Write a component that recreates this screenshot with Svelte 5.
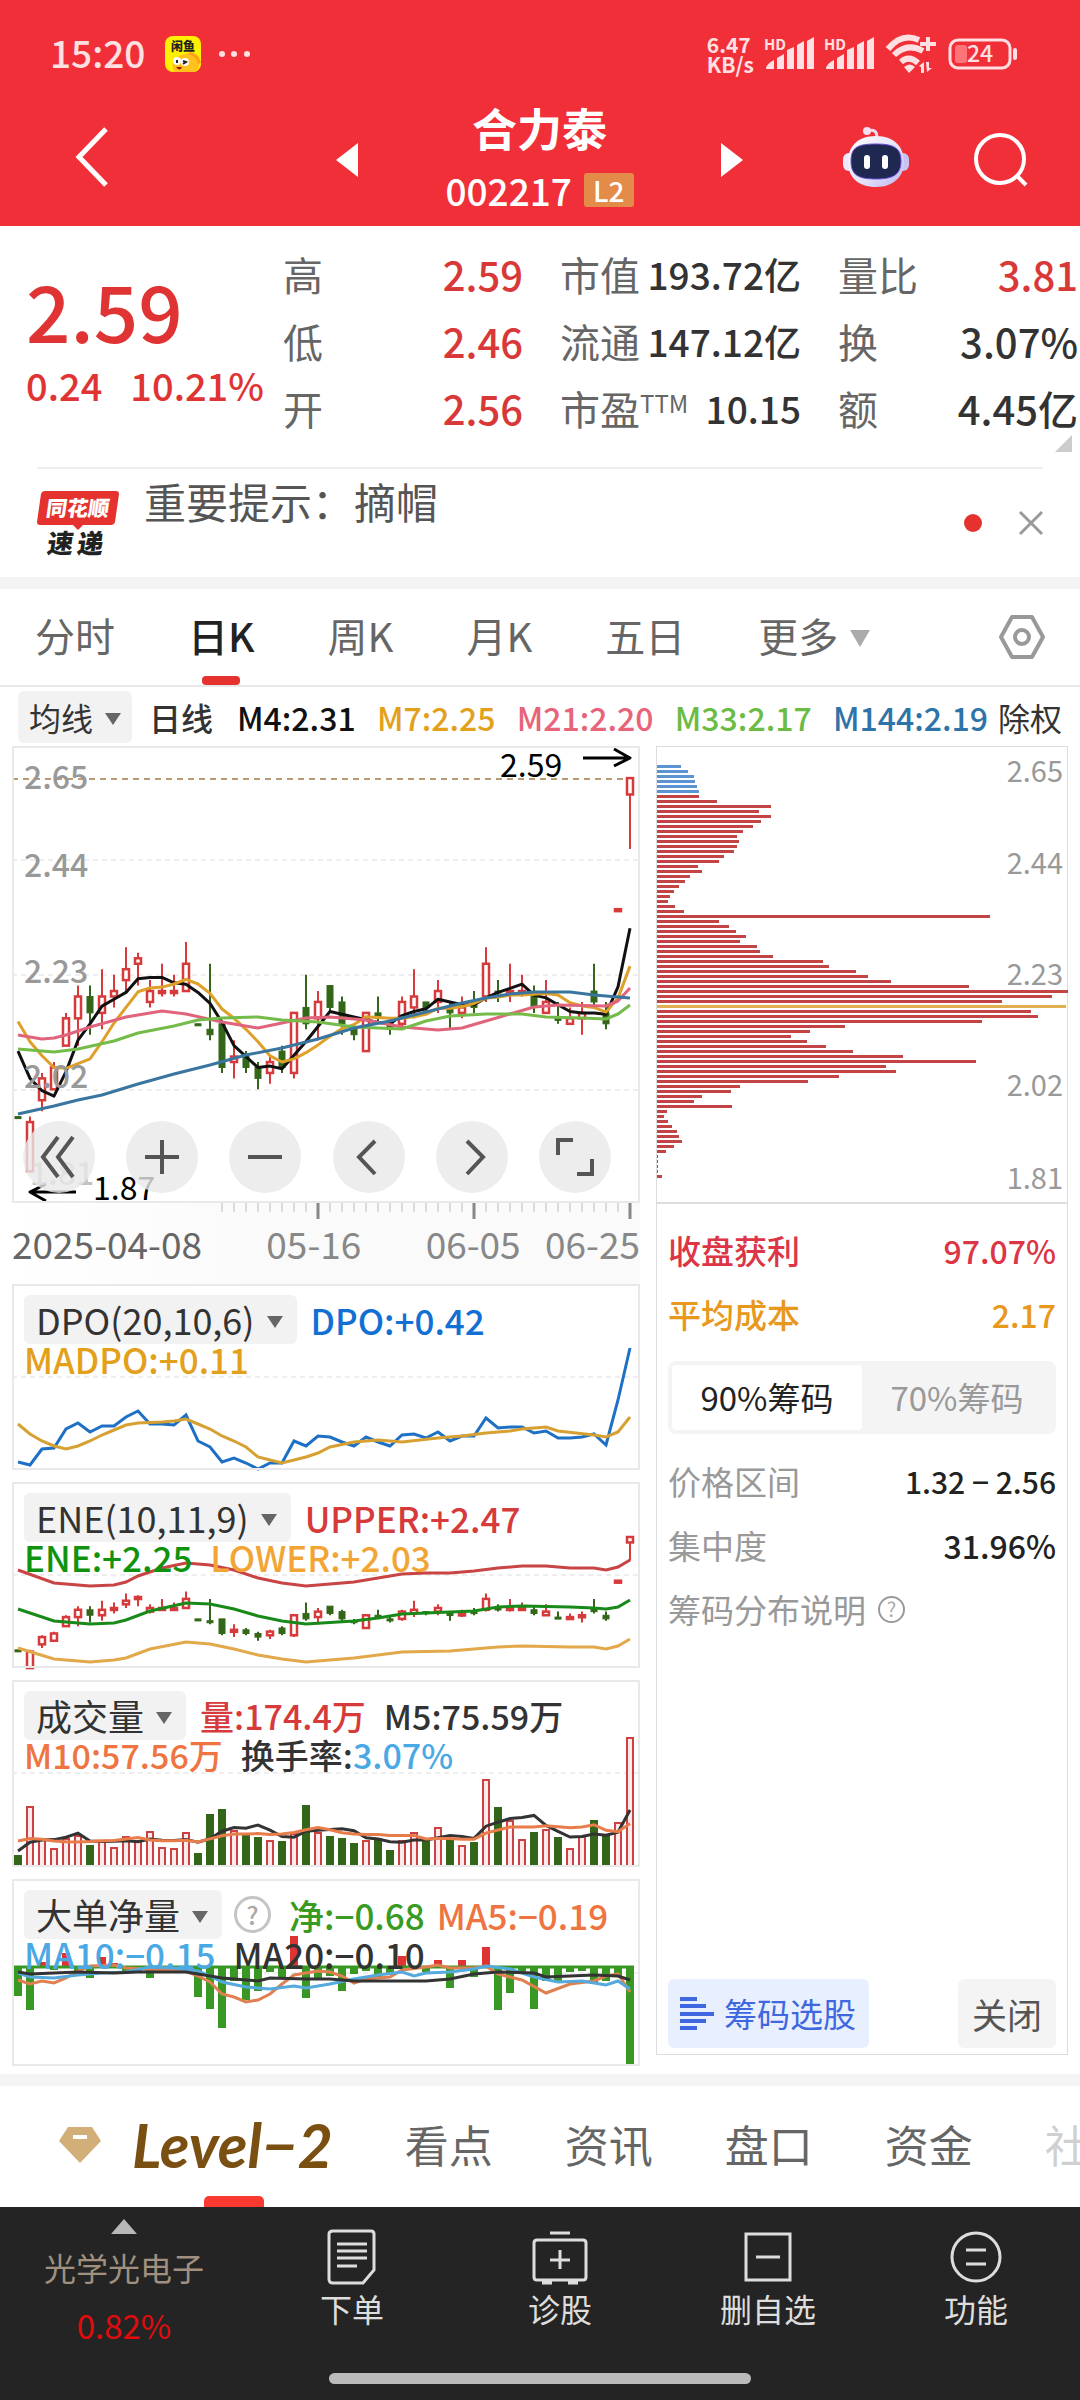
<script>
	// one step of every time chart is 12 units wide, 52 trading days
	const STEP = 12;
	const x = (i) => 6 + i * STEP;

	// [open, high, low, close, falling] in cents
	const candles = [
		[197, 197, 197, 197, 1], [187, 197, 187, 196], [200, 205, 198, 204], [202, 207, 202, 206],
		[210, 216, 210, 215], [215, 221, 210, 219], [219, 221, 212, 216], [216, 224, 213, 219],
		[219, 223, 217, 220], [222, 228, 220, 224], [225, 227, 221, 226], [218, 222, 217, 220],
		[220, 225, 219, 220], [220, 223, 219, 220], [220, 229, 220, 225], [214, 214, 214, 214, 1],
		[213, 225, 211, 212], [214, 214, 205, 206], [207, 211, 204, 208], [208, 209, 205, 206],
		[206, 207, 202, 204], [205, 208, 203, 207], [209, 210, 205, 206], [205, 216, 204, 216],
		[217, 223, 213, 214], [215, 220, 211, 218], [221, 221, 216, 217], [218, 219, 212, 214],
		[213, 214, 211, 212], [209, 216, 209, 216], [216, 219, 214, 215], [214, 215, 212, 213],
		[214, 219, 213, 218], [217, 224, 215, 219], [218, 218, 216, 217], [218, 222, 216, 220],
		[217, 218, 213, 216], [216, 219, 215, 217], [218, 220, 216, 217], [219, 228, 218, 225],
		[220, 222, 218, 220, 1], [220, 225, 218, 220], [220, 223, 219, 220], [219, 221, 216, 217],
		[216, 222, 216, 218], [215, 218, 214, 215, 1], [214, 217, 214, 215], [215, 218, 212, 216],
		[220, 225, 217, 218], [216, 218, 213, 214], [235, 235, 235, 235], [256, 259, 246, 259]
	].map(([o, h, l, c, f]) => ({ o, h, l, c, down: c < o || f === 1 }));

	const priceY = (p) => 114 + (244 - p) * 5.46;
	const eneY = (p) => 55 + (259 - p) * 1.82;

	function average(values, history, n) {
		const all = [...history, ...values];
		return values.map((_, i) => {
			const end = i + history.length + 1;
			return all.slice(end - n, end).reduce((a, b) => a + b, 0) / n;
		});
	}

	const closes = candles.map((d) => d.c);
	const closeHistory = [222, 222, 221, 216, 213, 210];
	const line = (ys) => ys.map((y, i) => `${x(i)},${y.toFixed(1)}`).join(' ');
	const sparse = (pts) => pts.map(([i, y]) => `${x(i)},${y}`).join(' ');

	const ma4 = line(average(closes, closeHistory, 4).map(priceY));
	const ma7 = line(average(closes, closeHistory, 7).map(priceY));
	const ma21 = sparse([[0, 289], [2, 293], [3, 292], [4, 289], [6, 281], [9, 271], [12, 265], [14, 268], [17, 276], [20, 282], [22, 277], [24, 272], [26, 271], [29, 274], [32, 281], [35, 284], [37, 282], [39, 275], [41, 268], [43, 261], [45, 259], [49, 260], [50, 255], [51, 242]]);
	const ma33 = sparse([[0, 303], [3, 306], [5, 303], [8, 295], [10, 287], [13, 280], [15, 274], [17, 272], [20, 271], [22, 274], [25, 276], [28, 281], [32, 283], [34, 275], [36, 270], [39, 268], [42, 268], [44, 271], [47, 272], [49, 273], [50, 268], [51, 259]]);
	const ma144 = sparse([[0, 368], [3, 360], [5, 354], [7, 349], [10, 338], [13, 328], [16, 319], [19, 309], [22, 302], [25, 293], [28, 282], [31, 275], [34, 266], [37, 257], [39, 252], [41, 248], [43, 246], [46, 246], [48, 249], [50, 251], [51, 252]]);

	const dpo = line([178, 181, 165, 164, 145, 139, 148, 142, 142, 133, 127, 140, 140, 141, 131, 157, 163, 178, 174, 179, 185, 179, 179, 157, 162, 152, 153, 158, 162, 153, 158, 162, 151, 150, 154, 148, 157, 152, 152, 134, 144, 143, 143, 149, 147, 154, 154, 153, 150, 161, 116, 64]);
	const madpo = sparse([[0, 140], [1, 150], [2, 157], [3, 162], [4, 165], [5, 162], [6, 157], [7, 151], [8, 146], [9, 141], [10, 139], [12, 138], [13, 137], [14, 135], [15, 140], [16, 145], [17, 152], [18, 157], [19, 163], [20, 173], [21, 176], [22, 179], [23, 176], [24, 173], [25, 169], [26, 163], [28, 158], [30, 156], [32, 158], [35, 154], [37, 152], [39, 149], [41, 147], [42, 145], [44, 143], [45, 147], [48, 151], [49, 153], [50, 148], [51, 133]]);

	const upper = sparse([[0, 88], [3, 101], [6, 104], [8, 103], [9, 100], [10, 94], [12, 86], [14, 81], [16, 83], [18, 88], [20, 96], [22, 101], [24, 104], [28, 100], [32, 92], [34, 91], [36, 91], [38, 89], [40, 86], [42, 84], [44, 84], [46, 86], [48, 86], [49, 88], [50, 85], [51, 78]]);
	const ene = sparse([[0, 127], [3, 139], [6, 142], [8, 141], [9, 138], [11, 129], [14, 121], [16, 122], [18, 127], [20, 134], [22, 139], [24, 142], [28, 139], [30, 136], [32, 132], [36, 130], [38, 129], [40, 125], [42, 124], [46, 125], [48, 126], [49, 127], [50, 125], [51, 118]]);
	const lower = sparse([[0, 166], [3, 177], [6, 180], [8, 178], [9, 176], [11, 167], [14, 160], [16, 162], [18, 167], [20, 173], [22, 177], [24, 180], [28, 176], [32, 170], [36, 169], [38, 167], [40, 165], [42, 164], [46, 165], [48, 165], [49, 167], [50, 164], [51, 157]]);

	const volumes = [12, 61, 28, 19, 29, 32, 22, 26, 20, 31, 27, 36, 20, 19, 35, 14, 53, 58, 37, 32, 30, 27, 26, 34, 62, 35, 31, 29, 24, 27, 29, 17, 27, 35, 27, 40, 29, 22, 25, 88, 60, 47, 28, 35, 38, 30, 19, 31, 47, 32, 45, 130];
	const volumeHistory = [36, 36, 36, 36, 36, 17, 17, 17, 17];
	const vol5 = line(average(volumes, volumeHistory, 5).map((v) => 187 - v));
	const vol10 = line(average(volumes, volumeHistory, 10).map((v) => 187 - v));

	const net = [28, 42, -6, 2, -15, 3, 10, -11, -5, 3, 3, 10, 3, 3, 4, 29, 41, 60, 13, 32, 23, 4, 11, -32, 30, 11, 8, 23, 6, 3, 11, 6, -12, -2, 4, -8, 20, -8, 9, -21, 42, 25, 6, 41, 13, 14, 4, 3, 16, 13, 9, 97];
	const net5 = sparse([[0, 101], [1, 105], [2, 102], [3, 104], [4, 99], [5, 92], [6, 87], [8, 86], [9, 89], [12, 91], [14, 92], [15, 97], [16, 103], [17, 115], [18, 118], [19, 123], [20, 121], [21, 115], [22, 105], [23, 96], [25, 92], [26, 93], [27, 97], [28, 104], [29, 100], [31, 98], [32, 91], [34, 88], [35, 86], [36, 89], [38, 89], [39, 87], [40, 95], [41, 98], [42, 101], [44, 114], [46, 105], [48, 102], [49, 97], [50, 95], [51, 113]]);
	const net10 = sparse([[0, 94], [1, 98], [3, 99], [5, 96], [7, 94], [9, 93], [11, 88], [13, 89], [15, 92], [16, 97], [17, 103], [19, 108], [21, 110], [23, 107], [24, 109], [26, 105], [28, 100], [30, 96], [32, 93], [33, 97], [34, 94], [36, 93], [38, 90], [39, 87], [41, 90], [43, 98], [45, 103], [47, 102], [49, 106], [50, 102], [51, 110]]);
	const net20 = sparse([[0, 93], [1, 95], [3, 94], [5, 93], [8, 94], [10, 93], [14, 93], [17, 99], [20, 102], [21, 99], [24, 100], [26, 100], [28, 102], [31, 102], [34, 102], [36, 100], [38, 95], [40, 93], [43, 94], [44, 98], [46, 97], [48, 96], [50, 97], [51, 101]]);

	const chips = [24, 31, 37, 38, 40, 42, 42, 60, 114, 102, 114, 104, 96, 86, 80, 82, 80, 77, 67, 62, 41, 45, 33, 28, 22, 17, 13, 11, 18, 27, 333, 62, 72, 79, 89, 83, 100, 103, 116, 166, 172, 199, 211, 234, 312, 411, 395, 345, 409, 374, 381, 325, 188, 153, 134, 150, 169, 196, 246, 319, 229, 239, 182, 151, 83, 74, 45, 37, 75, 10, 7, 11, 15, 20, 22, 25, 17, 9, 1, 1, 1, 1, 5];
	const chipColor = (n) => (n < 6 ? '#5b93d3' : n === 48 ? '#e0b050' : '#c24444');

	const ticks = Array.from({ length: 35 }, (_, k) => k + 17);
	const periods = ['分时', '日K', '周K', '月K', '五日'];
	let period = '日K';
	let range = '90';

	const averages = [
		['M4:2.31', '#111'],
		['M7:2.25', '#e3a01b'],
		['M21:2.20', '#e8647a'],
		['M33:2.17', '#6cbb45'],
		['M144:2.19', '#2f74a8']
	];
	const controls = [
		['最早', 'M35 16 20 36 35 56M50 16 35 36 50 56'],
		['放大', 'M36 19V53M19 36H53'],
		['缩小', 'M19 36H53'],
		['左移', 'M42 20 26 36 42 53'],
		['右移', 'M31 20 47 36 31 53'],
		['全屏', 'M19 34V19H34M53 38V53H38']
	];
</script>

{#snippet candleSet(y, w)}
	{#each candles as d, i}
		{@const top = Math.min(y(d.o), y(d.c))}
		{@const h = Math.max(Math.abs(y(d.o) - y(d.c)), 2)}
		{@const color = d.down ? '#336618' : '#d63a3a'}
		<path d="M{x(i)} {y(d.h)}V{top}M{x(i)} {top + h}V{y(d.l)}" stroke={color} stroke-width="2" />
		<rect x={x(i) - w / 2} y={top} width={w} height={h} fill={d.down ? color : '#fff'} stroke={color} stroke-width={d.down ? 1 : 2.5} />
	{/each}
{/snippet}

{#snippet signal()}
	<svg class="signal" viewBox="0 0 50 36" aria-hidden="true">
		<text x="0" y="14" font-size="15" font-weight="700">HD</text>
		<path d="M2 33q0-5 8-9v9ZM13 22l7-4v15h-7ZM23 14l7-3v22h-7ZM33 9l7-4v28h-7ZM43 5l7-4v32h-7Z" />
	</svg>
{/snippet}

<main>
	<header>
		<div class="status">
			<span class="clock">15:20</span>
			<svg class="fish" viewBox="0 0 36 36" aria-hidden="true">
				<rect width="36" height="36" rx="8" fill="#fdf000" />
				<path d="M9 36q-5-14 8-17 12-4 17 6v5q-1 5-7 6Z" fill="#ffc21c" />
				<path d="M22 18q9 1 11 10l3-1q-2-9-10-11Z" fill="#ff9f1a" />
				<text x="6" y="15" font-size="12" font-weight="900" fill="#222">闲鱼</text>
				<circle cx="12" cy="25" r="4" fill="#fff" /><circle cx="20" cy="26" r="4" fill="#fff" />
				<path d="M12 24v3M18 25l3 1-3 2" stroke="#222" stroke-width="2" fill="none" />
				<path d="M11 31h6q-2 5-6 0Z" fill="#a01818" />
			</svg>
			<svg class="dots" viewBox="0 0 34 8" aria-hidden="true"><circle cx="4" cy="4" r="3" /><circle cx="16" cy="4" r="3" /><circle cx="29" cy="4" r="3" /></svg>
			<span class="speed">6.47<br />KB/s</span>
			{@render signal()}
			{@render signal()}
			<svg class="wifi" viewBox="0 0 52 38" aria-hidden="true">
				<path d="M2 14Q16-3 33 5M8 20Q21 7 37 16M15 27q8-7 17 1" fill="none" stroke="#ffe0e2" stroke-width="6" />
				<path d="M18 32q6-5 11 0l-6 6ZM40 2h4v5h6v4h-6v5h-4v-5h-6V7h6ZM33 31l5-4v11h-3v-6ZM40 27h3v6h3l-5 4Z" />
			</svg>
			<svg class="battery" viewBox="0 0 70 32" aria-hidden="true">
				<rect x="2" y="2" width="60" height="28" rx="8" fill="none" stroke="#ffe0e2" stroke-width="3" />
				<rect x="7" y="7" width="12" height="18" rx="3" fill="#ff7478" />
				<rect x="65" y="10" width="4" height="12" rx="2" />
				<text x="19" y="24" font-size="23" font-weight="500">24</text>
			</svg>
		</div>
		<div class="nav">
			<button class="back" aria-label="返回"><svg viewBox="0 0 36 62"><path d="M32 3 5 31 32 59" fill="none" stroke="#fff" stroke-width="5" /></svg></button>
			<button class="step" aria-label="上一只"><svg viewBox="0 0 22 34"><path d="M22 0V34L0 17Z" fill="#fff" /></svg></button>
			<div class="name">
				<h1>合力泰</h1>
				<p>002217 <span>L2</span></p>
			</div>
			<button class="step" aria-label="下一只"><svg viewBox="0 0 22 34"><path d="M0 0V34L22 17Z" fill="#fff" /></svg></button>
			<button class="robot" aria-label="智能助手">
				<svg viewBox="0 0 66 62">
					<defs>
						<linearGradient id="shell" x1="0" y1="0" x2="1" y2="1"><stop offset="0" stop-color="#fff" /><stop offset=".6" stop-color="#e3e0fa" /><stop offset="1" stop-color="#b9b4ee" /></linearGradient>
					</defs>
					<path d="M25 5q9-3 9 7" fill="none" stroke="#f3dcf2" stroke-width="3" /><circle cx="24" cy="5" r="4" fill="#f8dff0" />
					<rect x="0" y="27" width="12" height="18" rx="6" fill="#eeeafc" /><rect x="54" y="27" width="12" height="18" rx="6" fill="#c7c3f2" />
					<path d="M33 10C52 10 61 22 61 36S51 61 33 61 5 51 5 36 14 10 33 10Z" fill="url(#shell)" />
					<path d="M33 18c18 0 25 4 25 17S51 53 33 53 8 49 8 35 15 18 33 18Z" fill="#1f2850" stroke="#6a50d8" stroke-width="1" />
					<rect x="21" y="29" width="6" height="14" rx="3" fill="#fff" /><rect x="39" y="29" width="6" height="14" rx="3" fill="#fff" />
				</svg>
			</button>
			<button class="search" aria-label="搜索"><svg viewBox="0 0 56 56"><circle cx="27" cy="28" r="24" fill="none" stroke="#fff" stroke-width="4" /><path d="m43 44 10 10" stroke="#fff" stroke-width="4" /></svg></button>
		</div>
	</header>

	<section class="quote">
		<div class="last">
			<strong>2.59</strong>
			<p><span>0.24</span><span>10.21%</span></p>
		</div>
		<dl>
			<div><dt>高</dt><dd class="up">2.59</dd></div>
			<div><dt>低</dt><dd class="up">2.46</dd></div>
			<div><dt>开</dt><dd class="up">2.56</dd></div>
		</dl>
		<dl class="mid">
			<div><dt>市值</dt><dd>193.72亿</dd></div>
			<div><dt>流通</dt><dd>147.12亿</dd></div>
			<div><dt>市盈<sup>TTM</sup></dt><dd>10.15</dd></div>
		</dl>
		<dl>
			<div><dt>量比</dt><dd class="up">3.81</dd></div>
			<div><dt>换</dt><dd>3.07%</dd></div>
			<div><dt>额</dt><dd>4.45亿</dd></div>
		</dl>
		<i class="corner"></i>
	</section>

	<section class="news">
		<svg class="express" viewBox="0 0 82 66" aria-hidden="true">
			<path d="M8 1H79q3 0 3 3L78 32q-1 3-4 3H46l-5 5-5-5H3q-3 0-3-3L4 4q1-3 4-3Z" fill="#e5322f" />
			<g transform="skewX(-8)" font-weight="900">
				<text x="12" y="26" font-size="21" fill="#fff">同花顺</text>
				<text x="18" y="63" font-size="26" fill="#222">速</text>
				<text x="48" y="63" font-size="26" fill="#222">递</text>
			</g>
		</svg>
		<a href="#notice">重要提示：摘帽</a>
		<i class="unread"></i>
		<button aria-label="关闭提示"><svg viewBox="0 0 24 24"><path d="m1 1 22 22M23 1 1 23" stroke="#999" stroke-width="3" /></svg></button>
	</section>

	<nav class="periods">
		{#each periods as p}
			<button class:active={p === period} on:click={() => (period = p)}>{p}</button>
		{/each}
		<button class="more">更多<i class="caret light"></i></button>
		<button class="gear" aria-label="设置"><svg viewBox="0 0 46 44"><path d="M13 2H33L44 22 33 42H13L2 22Z" fill="none" stroke="#999" stroke-width="4" stroke-linejoin="round" /><circle cx="23" cy="22" r="7" fill="none" stroke="#999" stroke-width="4" /></svg></button>
	</nav>

	<div class="legend">
		<button class="pick">均线<i class="caret"></i></button>
		<b>日线</b>
		<div>
			{#each averages as [label, color]}
				<span style:color>{label}</span>
			{/each}
		</div>
		<button class="plain">除权</button>
	</div>

	<div class="board">
		<div class="charts">
			<div class="frame">
				<svg viewBox="0 0 628 457" role="img" aria-label="日K线">
					<path d="M0 33H628" stroke="#b99a72" stroke-width="2" stroke-dasharray="6 5" />
					<path d="M0 114H628M0 229H628M0 344H628" stroke="#ddd" stroke-dasharray="5 4" />
					{@render candleSet(priceY, 6)}
					<g fill="none" stroke-width="3" stroke-linejoin="round">
						<polyline points={ma4} stroke="#111" />
						<polyline points={ma7} stroke="#dfa02a" />
						<polyline points={ma21} stroke="#e0647c" />
						<polyline points={ma33} stroke="#75bb4a" />
						<polyline points={ma144} stroke="#3a75a0" />
						<path d="M571 12H617M602 3 618 12 602 20M64 446H18M34 438 18 446 34 455" stroke="#000" />
					</g>
					<g font-size="32" font-weight="500" fill="#999">
						<text x="12" y="43">2.65</text><text x="12" y="131">2.44</text><text x="12" y="237">2.23</text>
						<text x="12" y="342">2.02</text><text x="18" y="439" opacity=".6">1.81</text>
					</g>
					<g font-size="32"><text x="488" y="31">2.59</text><text x="81" y="454">1.87</text></g>
				</svg>
				<div class="controls">
					{#each controls as [label, d]}
						<button aria-label={label}><svg viewBox="0 0 72 72"><path {d} fill="none" stroke="#555" stroke-width="4" /></svg></button>
					{/each}
				</div>
			</div>
			<div class="axis">
				<svg viewBox="0 0 628 16" aria-hidden="true">
					{#each ticks as i}
						{@const major = (i - 25) % 13 === 0}
						<path d="M{x(i)} 0V{major ? 16 : 9}" stroke={major ? '#888' : '#bbb'} stroke-width={major ? 3 : 1} />
					{/each}
				</svg>
				<p><b>2025-04-08</b><span>05-16</span><span>06-05</span><span>06-25</span></p>
			</div>

			<div class="frame sub">
				<svg viewBox="0 0 628 186" role="img" aria-label="DPO">
					<path d="M0 93H628" stroke="#ddd" stroke-dasharray="5 4" />
					<g fill="none" stroke-width="3"><polyline points={dpo} stroke="#1e70c4" /><polyline points={madpo} stroke="#d6a132" /></g>
				</svg>
				<div class="info">
					<p><button class="pick">DPO(20,10,6)<i class="caret"></i></button><span style:color="#126fd3">DPO:+0.42</span></p>
					<p><span style:color="#e3a01b">MADPO:+0.11</span></p>
				</div>
			</div>

			<div class="frame sub">
				<svg viewBox="0 0 628 186" role="img" aria-label="ENE">
					<path d="M0 93H628" stroke="#ddd" stroke-dasharray="5 4" />
					{@render candleSet(eneY, 6)}
					<g fill="none" stroke-width="3"><polyline points={upper} stroke="#c94444" /><polyline points={ene} stroke="#198a19" /><polyline points={lower} stroke="#e2a84a" /></g>
				</svg>
				<div class="info">
					<p><button class="pick">ENE(10,11,9)<i class="caret"></i></button><span style:color="#d63a3a">UPPER:+2.47</span></p>
					<p><span style:color="#0f930f">ENE:+2.25</span><span style:color="#f2a535">LOWER:+2.03</span></p>
				</div>
			</div>

			<div class="frame sub">
				<svg viewBox="0 0 628 187" role="img" aria-label="成交量">
					<path d="M0 93H628" stroke="#ddd" stroke-dasharray="5 4" />
					{#each volumes as v, i}
						{#if candles[i].down}
							<rect x={x(i) - 4} y={187 - v} width="8" height={v} fill="#336618" />
						{:else}
							<rect x={x(i) - 3} y={188 - v} width="6" height={v - 2} fill="#fdeaea" stroke="#cc4242" stroke-width="2" />
						{/if}
					{/each}
					<g fill="none" stroke-width="3"><polyline points={vol5} stroke="#333" /><polyline points={vol10} stroke="#e87c4b" /></g>
				</svg>
				<div class="info tight">
					<p><button class="pick">成交量<i class="caret"></i></button><span style:color="#d63a3a">量:174.4万</span><span>M5:75.59万</span></p>
					<p><span style:color="#ee7541">M10:57.56万</span><span>换手率:<em>3.07%</em></span></p>
				</div>
			</div>

			<div class="frame sub">
				<svg viewBox="0 0 628 187" role="img" aria-label="大单净量">
					<path d="M0 94H628" stroke="#ddd" stroke-dasharray="5 4" />
					{#each net as v, i}
						<rect x={x(i) - 4} y={v < 0 ? 89 + v : 89} width="8" height={Math.abs(v)} fill={v < 0 ? '#e03434' : '#389823'} />
					{/each}
					<path d="M0 88H622" stroke="#389823" stroke-width="3" />
					<g fill="none" stroke-width="3"><polyline points={net5} stroke="#e08050" /><polyline points={net10} stroke="#54a9dd" /><polyline points={net20} stroke="#333" /></g>
				</svg>
				<div class="info">
					<p>
						<button class="pick">大单净量<i class="caret"></i></button>
						<button class="help" aria-label="说明">?</button>
						<span style:color="#399b24">净:−0.68</span><span style:color="#ee7541" class="near">MA5:−0.19</span>
					</p>
					<p><span style:color="#4aa8e4">MA10:−0.15</span><span>MA20:−0.10</span></p>
				</div>
			</div>
		</div>

		<aside>
			<svg viewBox="0 0 410 457" role="img" aria-label="筹码分布">
				{#each chips as w, n}
					<rect x="0" y={18 + n * 5} width={w} height="3" fill={chipColor(n)} />
				{/each}
				<path d="M0 456H410" stroke="#ddd" stroke-width="2" />
				<g font-size="29" fill="#999" text-anchor="end">
					<text x="406" y="35">2.65</text><text x="406" y="127">2.44</text><text x="406" y="238">2.23</text>
					<text x="406" y="349">2.02</text><text x="406" y="442">1.81</text>
				</g>
			</svg>
			<div class="chipinfo">
				<p class="win"><span>收盘获利</span><b>97.07%</b></p>
				<p class="cost"><span>平均成本</span><b>2.17</b></p>
				<div class="segment">
					<button class:active={range === '90'} on:click={() => (range = '90')}>90%筹码</button>
					<button class:active={range === '70'} on:click={() => (range = '70')}>70%筹码</button>
				</div>
				<p><span>价格区间</span><b class="small">1.32 − 2.56</b></p>
				<p><span>集中度</span><b>31.96%</b></p>
				<p class="explain"><span>筹码分布说明</span><button class="help" aria-label="筹码分布说明">?</button></p>
			</div>
			<div class="actions">
				<button class="select"><svg viewBox="0 0 34 33" aria-hidden="true"><path d="M0 2H17M0 9H26M0 17H34M0 24H26M0 31H17" stroke="#3f68e0" stroke-width="4" /></svg>筹码选股</button>
				<button class="close">关闭</button>
			</div>
		</aside>
	</div>

	<nav class="sections">
		<a class="level" href="#level2">
			<svg viewBox="0 0 42 36" aria-hidden="true"><path d="M9 0H33L42 14 21 36 0 14Z" fill="#d2ae78" /><path d="M14 10H28" stroke="#fff" stroke-width="4" /></svg>
			<b>Level−2</b>
		</a>
		<a href="#view">看点</a><a href="#news">资讯</a><a href="#depth">盘口</a><a href="#fund">资金</a><a class="fade" href="#club">社区</a>
	</nav>

	<footer>
		<div class="tabs">
			<button class="sector"><i></i><span>光学光电子</span><b>0.82%</b></button>
			<button>
				<svg viewBox="0 0 56 56"><path d="M9 2H47q3 0 3 3V41L39 54H9q-4 0-4-4V5q0-3 4-3ZM13 15H43M13 22H43M13 29H43M13 37H33" /></svg>下单
			</button>
			<button>
				<svg viewBox="0 0 56 56"><path d="M18 4H38M5 11H51q3 0 3 3V48q0 3-3 3H5q-3 0-3-3V14q0-3 3-3ZM28 21V40M18 31H38M10 54H20M36 54H46" /></svg>诊股
			</button>
			<button>
				<svg viewBox="0 0 56 56"><path d="M6 5H50V51H6ZM16 28H40" /></svg>删自选
			</button>
			<button>
				<svg viewBox="0 0 56 56"><circle cx="28" cy="28" r="24" /><path d="M18 21H38M18 35H38" /></svg>功能
			</button>
		</div>
		<i class="home"></i>
	</footer>
</main>

<style>
	:global(body) {
		background: #fff;
		color: #333;
		font-family: 'Noto Sans CJK SC', sans-serif;
	}
	main {
		overflow: hidden;
		line-height: 1;
	}
	main * {
		box-sizing: border-box;
	}
	button {
		margin: 0;
		padding: 0;
		border: 0;
		background: none;
		color: inherit;
		font: inherit;
		cursor: pointer;
	}
	a {
		color: inherit;
		text-decoration: none;
	}
	svg {
		display: block;
		overflow: visible;
	}
	p,
	h1,
	dl,
	dd {
		margin: 0;
	}
	i,
	em {
		font-style: normal;
	}

	header {
		background: #f12f38;
		color: #fff;
		padding: 30px 52px 10px 50px;
	}
	.status {
		display: flex;
		align-items: center;
		height: 48px;
		padding-right: 10px;
		color: #ffe0e2;
		fill: #ffe0e2;
	}
	.clock {
		font-size: 37px;
		font-weight: 500;
		line-height: 44px;
		padding-bottom: 4px;
	}
	.fish {
		width: 36px;
		margin-left: 20px;
	}
	.dots {
		width: 34px;
		margin-left: 17px;
	}
	.speed {
		margin-left: auto;
		font-size: 21px;
		line-height: 20px;
		font-weight: 700;
	}
	.signal {
		width: 50px;
		margin-left: 10px;
	}
	.wifi {
		width: 52px;
		margin-left: 12px;
	}
	.battery {
		width: 70px;
		margin-left: 10px;
	}
	.nav {
		display: flex;
		align-items: center;
		height: 138px;
	}
	.back {
		width: 36px;
		margin: 20px 0 0 24px;
	}
	.step {
		width: 22px;
		padding-top: 26px;
	}
	.back + .step {
		margin-left: 226px;
	}
	.name {
		flex: 1;
		padding-top: 24px;
		text-align: center;
	}
	.name h1 {
		font-size: 45px;
		font-weight: 700;
		line-height: 62px;
	}
	.name p {
		display: flex;
		justify-content: center;
		align-items: center;
		gap: 12px;
		font-size: 37px;
		font-weight: 500;
		line-height: 62px;
	}
	.name span {
		padding: 0 9px;
		border-radius: 3px;
		background: #e38b49;
		font-size: 28px;
		line-height: 34px;
	}
	.robot {
		width: 66px;
		margin-left: 100px;
		padding-top: 20px;
	}
	.search {
		width: 56px;
		margin: 0 -1px 0 64px;
		padding-top: 24px;
	}

	.quote {
		position: relative;
		display: grid;
		grid-template-columns: 220fr 240fr 241fr 240fr;
		gap: 37px;
		padding: 15px 2px 25px 26px;
		font-size: 40px;
	}
	.quote .last {
		min-width: 0;
		color: #e03434;
		font-weight: 500;
		white-space: nowrap;
		padding-top: 26px;
	}
	.last strong {
		display: block;
		font-size: 78px;
		line-height: 84px;
		font-weight: 500;
	}
	.last p {
		display: flex;
		gap: 28px;
		font-size: 38px;
		line-height: 68px;
	}
	.quote dl div {
		display: flex;
		justify-content: space-between;
		line-height: 67px;
		white-space: nowrap;
	}
	dt {
		color: #666;
	}
	dd {
		font-weight: 500;
	}
	.mid dd {
		font-size: 37px;
	}
	.up {
		color: #d93838;
	}
	sup {
		font-size: 24px;
		line-height: 1;
		vertical-align: 12px;
	}
	.corner {
		position: absolute;
		right: 8px;
		bottom: 15px;
		border: solid transparent;
		border-width: 17px 0 0 17px;
		border-bottom: 17px solid #ccc;
		border-top: 0;
	}

	.news {
		display: flex;
		align-items: center;
		margin: 0 37px;
		height: 110px;
		border-top: 2px solid #eee;
		font-size: 42px;
		color: #555;
	}
	.express {
		width: 82px;
	}
	.news a {
		margin-left: 25px;
		padding-bottom: 44px;
	}
	.unread {
		width: 18px;
		height: 18px;
		margin-left: auto;
		border-radius: 50%;
		background: #e5322f;
	}
	.news button {
		width: 24px;
		margin-left: 37px;
	}

	.periods {
		display: flex;
		align-items: center;
		gap: 73px;
		height: 110px;
		padding: 0 35px;
		border-top: 12px solid #f4f4f4;
		border-bottom: 2px solid #e8e8e8;
		font-size: 40px;
		color: #666;
	}
	.periods button {
		position: relative;
		line-height: 92px;
		padding-bottom: 4px;
		white-space: nowrap;
	}
	.periods .active {
		color: #222;
		font-weight: 500;
	}
	.periods .active::after {
		content: '';
		position: absolute;
		left: 50%;
		bottom: 0;
		width: 38px;
		height: 9px;
		margin-left: -19px;
		border-radius: 4px;
		background: #e5322f;
	}
	.periods .gear {
		width: 46px;
		margin-left: auto;
		padding: 0;
	}
	.caret {
		display: inline-block;
		margin-left: 12px;
		border: solid transparent;
		border-width: 12px 8px 0;
		border-top-color: #666;
		vertical-align: middle;
		margin-bottom: 6px;
	}
	.caret.light {
		border-width: 17px 10px 0;
		border-top-color: #aaa;
	}

	.legend {
		display: flex;
		align-items: center;
		height: 59px;
		padding: 0 18px;
		font-size: 32px;
		white-space: nowrap;
	}
	.pick {
		border-radius: 6px;
		background: #f2f2f2;
		color: #333;
	}
	.legend .pick {
		padding: 0 11px;
		line-height: 52px;
	}
	.legend b {
		margin: 0 24px 0 17px;
		font-weight: 500;
	}
	.legend div {
		display: flex;
		flex: 1;
		justify-content: space-between;
		font-weight: 500;
	}
	.plain {
		margin-left: 10px;
	}

	.board {
		display: grid;
		grid-template-columns: 628fr 412fr;
		gap: 16px;
		padding: 0 12px 8px;
	}
	.frame {
		position: relative;
		outline: 2px solid #e9e9e9;
		outline-offset: -2px;
	}
	.controls {
		position: absolute;
		left: 11px;
		right: 29px;
		bottom: 10px;
		display: flex;
		justify-content: space-between;
	}
	.controls button {
		width: 72px;
		border-radius: 50%;
		background: rgba(232, 232, 232, 0.8);
	}
	.axis {
		height: 81px;
		background: linear-gradient(90deg, #fff, #fafafa 40%);
	}
	.axis p {
		display: flex;
		justify-content: space-between;
		font-size: 37px;
		line-height: 48px;
		color: #888;
		white-space: nowrap;
	}
	.axis b {
		color: #666;
		font-weight: 400;
	}
	.axis span:nth-child(2) {
		margin: 0 40px;
	}
	.sub + .sub {
		margin-top: 12px;
	}
	.info {
		position: absolute;
		top: 11px;
		left: 12px;
		font-size: 35px;
		font-weight: 500;
		line-height: 49px;
		white-space: nowrap;
	}
	.info.tight {
		font-size: 34px;
	}
	.info p {
		display: flex;
		align-items: center;
		gap: 18px;
	}
	.info p + p {
		line-height: 30px;
	}
	.info .pick {
		padding: 0 14px 0 12px;
		font-size: 36px;
		font-weight: 400;
		margin-right: -4px;
	}
	.info em {
		color: #4aa8e4;
	}
	.info .near {
		margin-left: -6px;
	}
	.help {
		width: 37px;
		height: 37px;
		border: 3px solid #c4c4c4;
		border-radius: 50%;
		color: #aaa;
		font-size: 25px;
		line-height: 29px;
	}
	.info .help {
		margin-left: -2px;
	}

	aside {
		display: flex;
		flex-direction: column;
		border: 1px solid #ddd;
		margin-bottom: 11px;
		font-size: 33px;
	}
	.chipinfo {
		padding: 14px 11px;
	}
	.chipinfo p {
		display: flex;
		align-items: center;
		justify-content: space-between;
		color: #999;
		line-height: 64px;
	}
	.chipinfo b {
		color: #222;
		font-size: 32px;
		font-weight: 500;
	}
	.chipinfo .small {
		font-size: 30px;
	}
	.win span,
	.chipinfo .win b {
		color: #dc3545;
	}
	.cost span,
	.chipinfo .cost b {
		color: #e8981c;
	}
	.win span,
	.cost span {
		font-weight: 500;
	}
	.chipinfo .explain {
		justify-content: flex-start;
		gap: 12px;
	}
	.explain .help {
		width: 27px;
		height: 27px;
		border: 2px solid #999;
		font-size: 20px;
		line-height: 22px;
	}
	.segment {
		display: flex;
		margin: 15px 0;
		padding: 4px;
		border-radius: 8px;
		background: #f4f4f4;
	}
	.segment button {
		flex: 1;
		border-radius: 4px;
		color: #999;
		line-height: 65px;
	}
	.segment .active {
		background: #fff;
		color: #222;
	}
	.actions {
		display: flex;
		justify-content: space-between;
		margin-top: auto;
		padding: 6px 11px;
	}
	.actions button {
		padding: 0 14px;
		border-radius: 6px;
		background: #f4f4f4;
		font-size: 35px;
		line-height: 69px;
		color: #555;
	}
	.actions .select {
		display: flex;
		align-items: center;
		gap: 10px;
		padding: 0 13px 0 12px;
		background: #e8effe;
		color: #3f68e0;
		font-size: 33px;
	}
	.select svg {
		width: 34px;
	}

	.sections {
		display: flex;
		align-items: center;
		gap: 72px;
		height: 133px;
		padding-left: 59px;
		border-top: 12px solid #f4f4f4;
		font-size: 44px;
		color: #666;
		white-space: nowrap;
	}
	.sections a {
		line-height: 117px;
		padding-bottom: 4px;
	}
	.level {
		position: relative;
		display: flex;
		align-items: center;
		gap: 31px;
	}
	.level svg {
		width: 42px;
	}
	.level b {
		font-family: Lato, sans-serif;
		font-size: 61px;
		font-style: italic;
		font-weight: 700;
		color: #7a4f12;
	}
	.level::after {
		content: '';
		position: absolute;
		left: 53%;
		bottom: 0;
		width: 60px;
		height: 11px;
		border-radius: 5px 5px 0 0;
		background: #fa3a30;
	}
	.fade {
		opacity: 0.3;
	}

	footer {
		background: #242424;
		color: #ddd;
		padding: 12px 0 16px;
	}
	.tabs {
		display: grid;
		grid-template-columns: 248fr 208fr 208fr 208fr 208fr;
		height: 154px;
	}
	.tabs button {
		display: flex;
		flex-direction: column;
		align-items: center;
		font-size: 32px;
		line-height: 47px;
	}
	.tabs svg {
		width: 56px;
		margin: 10px 0 0;
		fill: none;
		stroke: #ddd;
		stroke-width: 3;
	}
	.tabs .sector {
		color: #a2907f;
	}
	.sector i {
		border: solid transparent;
		border-width: 0 13px 15px;
		border-bottom-color: #b8b8b8;
	}
	.sector span {
		line-height: 66px;
	}
	.sector b {
		font-size: 33px;
		line-height: 50px;
		font-weight: 400;
		color: #e00c0c;
	}
	.home {
		display: block;
		width: 39%;
		height: 11px;
		margin: 0 auto;
		border-radius: 6px;
		background: #bbb;
	}
</style>
